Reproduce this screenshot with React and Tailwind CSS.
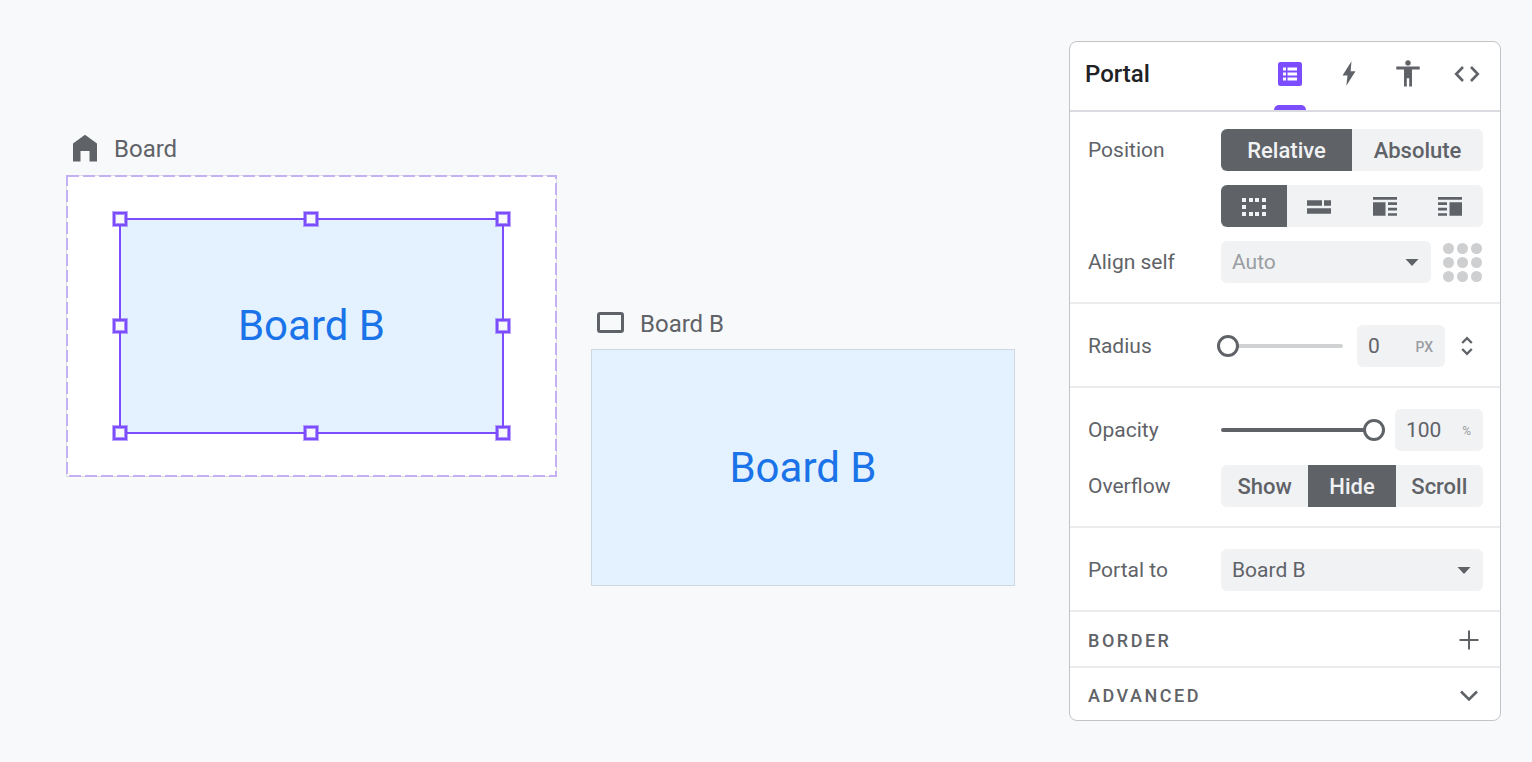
import React from "react";

const FIELD = "h-[42px] rounded-md bg-[#f1f2f4] text-[#5f6368]";

function Handle({ className }) {
  return (
    <span
      className={`absolute size-[14px] border-2 border-[#7c4dff] bg-[#f8f9fb] shadow-[0_0_0_1px_rgba(124,77,255,0.5),inset_0_0_0_1px_rgba(124,77,255,0.6)] ${className}`}
    />
  );
}

function Section({ first, children }) {
  return (
    <section
      className={`grid grid-cols-[133px_1fr] items-center gap-y-[14px] border-b-2 border-[#ebecee] pr-[17px] pb-[19px] pl-[18px] ${
        first ? "pt-[17px]" : "pt-[21px]"
      }`}
    >
      {children}
    </section>
  );
}

function Segments({ label, options, active }) {
  return (
    <div role="group" aria-label={label} className="flex h-[42px] overflow-hidden rounded-md bg-[#f1f2f4]">
      {options.map((o, i) => (
        <button
          key={o.name}
          type="button"
          aria-label={o.name}
          aria-pressed={i === active}
          className={`flex flex-1 basis-0 items-center justify-center pt-px text-[22px] leading-none font-medium ${
            i === active ? "bg-[#5f6368] text-[#f1f2f4]" : "text-[#5f6368]"
          }`}
        >
          {o.icon || o.name}
        </button>
      ))}
    </div>
  );
}

function Select({ id, value, muted }) {
  return (
    <div className="relative flex-1">
      <select
        id={id}
        defaultValue={value}
        className={`w-full appearance-none px-[11px] pt-0.5 text-[21px] ${FIELD} ${muted ? "text-[#9a9da1]!" : ""}`}
      >
        <option>{value}</option>
      </select>
      <svg viewBox="0 0 14 7" className="pointer-events-none absolute top-[18px] right-3 h-[7px] w-[14px]" fill="#5f6368">
        <path d="M.5 0h13L7 7z" />
      </svg>
    </div>
  );
}

function Slider({ id, value, className, track }) {
  return (
    <input
      id={id}
      type="range"
      defaultValue={value}
      className={`h-[22px] w-0 min-w-0 flex-1 appearance-none bg-transparent [&::-webkit-slider-runnable-track]:h-1 [&::-webkit-slider-runnable-track]:rounded-full [&::-webkit-slider-thumb]:-mt-[9px] [&::-webkit-slider-thumb]:size-[22px] [&::-webkit-slider-thumb]:appearance-none [&::-webkit-slider-thumb]:rounded-full [&::-webkit-slider-thumb]:border-[3px] [&::-webkit-slider-thumb]:border-solid [&::-webkit-slider-thumb]:border-[#5f6368] [&::-webkit-slider-thumb]:bg-white ${track} ${className}`}
    />
  );
}

function NumberField({ label, value, unit, unitClass }) {
  return (
    <label className={`flex w-[88px] shrink-0 items-center justify-between pr-3 pl-[11px] ${FIELD}`}>
      <input aria-label={label} defaultValue={value} className="w-10 bg-transparent pt-0.5 text-[21px]" />
      <span className={`pt-0.5 text-[#9a9da1] ${unitClass}`}>{unit}</span>
    </label>
  );
}

const marquee = (
  <svg width="24" height="18" fill="currentColor">
    {[0, 7, 13, 20].map((x) => (
      <React.Fragment key={x}>
        <rect x={x} y="0" width="4" height="4" />
        <rect x={x} y="14" width="4" height="4" />
      </React.Fragment>
    ))}
    <rect x="0" y="7" width="4" height="4" />
    <rect x="20" y="7" width="4" height="4" />
  </svg>
);

const inline = (
  <svg width="24" height="14" fill="currentColor">
    <path d="M0 .3h15v5.500H0zM17 .3h7v5.500h-7zM0 8.300h24v5.500H0z" />
  </svg>
);

const floatLeft = (
  <svg width="24" height="19" fill="currentColor">
    <path d="M0 0h24v2.700H0zM0 5.300h12.500v13.500H0zM15 5.300h9v2.700h-9zM15 10.800h9v2.600h-9zM15 16.200h9v2.600h-9z" />
  </svg>
);

const floatRight = (
  <svg width="24" height="19" fill="currentColor">
    <path d="M0 0h24v2.700H0zM11.500 5.300H24v13.500H11.500zM0 5.300h9v2.700H0zM0 10.800h9v2.600H0zM0 16.200h9v2.600H0z" />
  </svg>
);

function Canvas() {
  return (
    <main className="relative flex-1">
      <div className="absolute top-[134px] left-[66px]">
        <h2 className="flex h-[30px] items-center gap-4 pl-[6px] text-2xl leading-none text-[#5f6368]">
          <svg width="26" height="30" fill="currentColor">
            <path d="M1 9.500 13 .8 25 9.500V27.500h-7.500V17h-9V27.500H1z" />
          </svg>
          Board
        </h2>
        <div className="relative mt-[11px] flex h-[302px] w-[491px] items-center justify-center bg-white">
          <svg className="absolute inset-0 size-full" fill="none">
            <rect x=".5" y=".5" width="490" height="301" stroke="#dcdde2" />
            <rect x="1" y="1" width="489" height="300" stroke="#c3b1f3" strokeWidth="2" strokeDasharray="12 4" />
          </svg>
          <div className="relative flex h-[216px] w-[385px] items-center justify-center border-2 border-[#7c4dff] bg-[#e4f2ff] text-[42px] leading-none text-[#1a73e8]">
            Board B
            <Handle className="-top-2 -left-2" />
            <Handle className="-top-2 left-[183px]" />
            <Handle className="-top-2 -right-2" />
            <Handle className="top-[99px] -left-2" />
            <Handle className="top-[99px] -right-2" />
            <Handle className="-bottom-2 -left-2" />
            <Handle className="-bottom-2 left-[183px]" />
            <Handle className="-right-2 -bottom-2" />
          </div>
        </div>
      </div>

      <div className="absolute top-[309px] left-[591px]">
        <h2 className="flex h-[30px] items-center gap-4 pl-[6px] text-2xl leading-none text-[#5f6368]">
          <svg width="27" height="24" fill="none" stroke="currentColor" strokeWidth="3">
            <rect x="1.500" y="1.500" width="24" height="18" rx="1.500" />
          </svg>
          Board B
        </h2>
        <div className="mt-[10px] flex h-[237px] w-[424px] items-center justify-center border border-[#cdd8e1] bg-[#e4f2ff] text-[42px] leading-none text-[#1a73e8]">
          Board B
        </div>
      </div>
    </main>
  );
}

function Tab({ label, active, children }) {
  return (
    <button
      type="button"
      role="tab"
      aria-label={label}
      aria-selected={!!active}
      className="relative flex h-[68px] w-8 items-center justify-center pb-[5px] text-[#5f6368]"
    >
      {children}
      {active && <span className="absolute bottom-0 left-0 h-[5px] w-8 rounded-t-[5px] bg-[#7c4dff]" />}
    </button>
  );
}

const labelClass = "text-[21px] leading-none";
const capsClass =
  "flex w-full items-center justify-between pr-[21px] pl-[18px] text-lg leading-none font-medium tracking-[0.14em]";

function Inspector() {
  return (
    <aside className="mt-[41px] mr-[31px] w-[432px] shrink-0 self-start overflow-hidden rounded-lg border border-[#c2c4c7] bg-white text-[#5f6368]">
      <header className="flex items-center justify-between border-b-2 border-[#dadbe0] pr-[17px] pl-[15px]">
        <h1 className="pb-1 text-2xl leading-none font-medium text-[#202124]">Portal</h1>
        <div role="tablist" className="flex gap-[27px]">
          <Tab label="Properties" active>
            <svg width="24" height="24">
              <rect width="24" height="24" rx="2.500" fill="#7c4dff" />
              <path d="M5 5.500h3v3H5zM9.500 5.500H19v3H9.500zM5 10.500h3v3H5zM9.500 10.500H19v3H9.500zM5 15.500h3v3H5zM9.500 15.500H19v3H9.500z" fill="#fff" />
            </svg>
          </Tab>
          <Tab label="Events">
            <svg width="14" height="25" viewBox="0 0 14 25" fill="currentColor">
              <path d="M9.500.3 .5 14.500H5.500L4.300 24.700 13.500 10.200H8.600z" />
            </svg>
          </Tab>
          <Tab label="Accessibility">
            <svg width="24" height="27" viewBox="0 0 24 27" fill="currentColor">
              <circle cx="12" cy="2.900" r="2.700" />
              <path d="M.3 6.500h23.400v3H16V26.500h-2.800V18.300h-2.400V26.500H8V9.500H.3z" />
            </svg>
          </Tab>
          <Tab label="Code">
            <svg width="26" height="16" viewBox="0 0 26 16" fill="none" stroke="currentColor" strokeWidth="2.600">
              <path d="M9 1 2.200 8 9 15M17 1l6.800 7L17 15" />
            </svg>
          </Tab>
        </div>
      </header>

      <Section first>
        <span className={labelClass}>Position</span>
        <Segments label="Position" active={0} options={[{ name: "Relative" }, { name: "Absolute" }]} />
        <div className="col-start-2">
          <Segments
            label="Flow"
            active={0}
            options={[
              { name: "Block", icon: marquee },
              { name: "Inline", icon: inline },
              { name: "Float left", icon: floatLeft },
              { name: "Float right", icon: floatRight },
            ]}
          />
        </div>
        <label htmlFor="align" className={labelClass}>Align self</label>
        <div className="flex items-center gap-3">
          <Select id="align" value="Auto" muted />
          <button type="button" aria-label="Alignment" className="grid w-10 grid-cols-3 justify-center gap-[3px] pr-px">
            {Array.from({ length: 9 }, (_, i) => (
              <span key={i} className="size-[11px] rounded-full bg-[#cecfd1]" />
            ))}
          </button>
        </div>
      </Section>

      <Section>
        <label htmlFor="radius" className={labelClass}>Radius</label>
        <div className="flex items-center">
          <Slider id="radius" value={0} className="-ml-1 mr-[14px]" track="[&::-webkit-slider-runnable-track]:bg-[#d0d1d2]" />
          <NumberField label="Radius value" value="0" unit="PX" unitClass="text-sm font-medium" />
          <button type="button" aria-label="Expand corners" className="ml-3 flex w-[26px] shrink-0 justify-start pl-[3px]">
            <svg width="14" height="20" viewBox="0 0 14 20" fill="none" stroke="currentColor" strokeWidth="2.300">
              <path d="m2.200 7 4.800-4.800L11.800 7M2.200 13l4.800 4.800 4.800-4.800" />
            </svg>
          </button>
        </div>
      </Section>

      <Section>
        <label htmlFor="opacity" className={labelClass}>Opacity</label>
        <div className="flex items-center">
          <Slider id="opacity" value={100} className="mr-[10px]" track="[&::-webkit-slider-runnable-track]:bg-[#5f6368]" />
          <NumberField label="Opacity value" value="100" unit="%" unitClass="text-xs" />
        </div>
        <span className={labelClass}>Overflow</span>
        <Segments label="Overflow" active={1} options={[{ name: "Show" }, { name: "Hide" }, { name: "Scroll" }]} />
      </Section>

      <Section>
        <label htmlFor="portal" className={labelClass}>Portal to</label>
        <Select id="portal" value="Board B" />
      </Section>

      <button type="button" className={`h-14 border-b-2 border-[#ebecee] pt-1 ${capsClass}`}>
        BORDER
        <svg width="20" height="22" fill="none" stroke="currentColor" strokeWidth="2">
          <path d="M10 .5v19M.5 10h19" />
        </svg>
      </button>
      <button type="button" className={`h-[52px] pt-1 ${capsClass}`}>
        ADVANCED
        <svg width="20" height="12" fill="none" stroke="currentColor" strokeWidth="2.600">
          <path d="m2 1.500 8 8 8-8" />
        </svg>
      </button>
    </aside>
  );
}

export default function App() {
  return (
    <div className="flex min-h-screen bg-[#f8f9fb] font-[Roboto,sans-serif]">
      <Canvas />
      <Inspector />
    </div>
  );
}
